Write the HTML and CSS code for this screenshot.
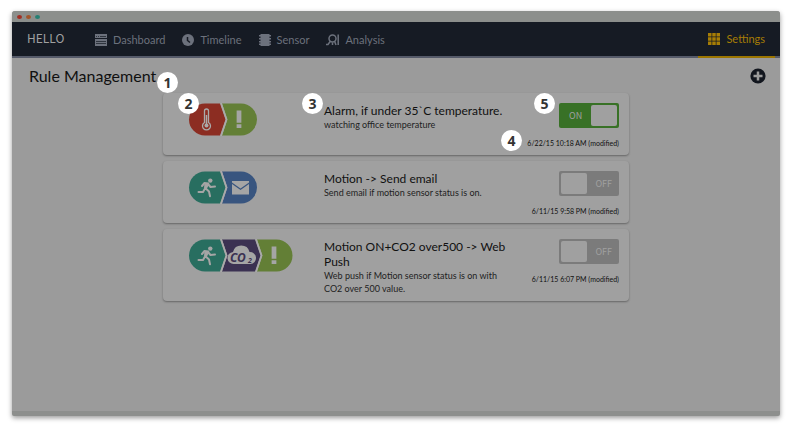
FILE: index.html
```html
<!DOCTYPE html>
<html lang="en">
<head>
<meta charset="utf-8">
<title>Rule Management</title>
<link rel="stylesheet" href="styles.css">
</head>
<body>
<svg class="defs" aria-hidden="true">
  <symbol id="run" viewBox="0 0 20 20">
    <circle cx="13.300" cy="2.600" r="2.200" fill="currentColor"/>
    <path d="M5 8 L7.500 5 L11.300 5.500 L8.800 10.500 L12 13.500 L13 18.300 M8 10.500 L6 14 L1.500 14 M11 6 L13.500 9 L18 8.500" fill="none" stroke="currentColor" stroke-width="2" stroke-linejoin="round" stroke-linecap="round"/>
    <path d="M7.500 5 L11.800 5.500 L9.500 11 L7 10z" fill="currentColor"/>
  </symbol>
  <symbol id="bang" viewBox="0 0 6 20">
    <path d="M0.500 0.500h5v13h-5z M0.500 15h5v4h-5z" fill="currentColor"/>
  </symbol>
</svg>
<div class="window">
  <div class="titlebar"><i class="dot red"></i><i class="dot orange"></i><i class="dot teal"></i></div>
  <nav class="nav">
    <a class="brand" href="#">HELLO</a>
    <a class="item" href="#">
      <svg width="12" height="12" viewBox="0 0 12 12"><path fill="currentColor" d="M0 0h12v4H0zM0 5h12v7H0z"/><path stroke="#161b24" d="M1 2.500h1M3 2.500h1M5 2.500h6M1 7.500h10M1 9.500h10" stroke-width=".7"/></svg>
      Dashboard</a>
    <a class="item" href="#">
      <svg width="12" height="12" viewBox="0 0 12 12"><circle cx="6" cy="6" r="6" fill="currentColor"/><path d="M5.500 3v3.500L8 8.500" fill="none" stroke="#161b24" stroke-width="1.500"/></svg>
      Timeline</a>
    <a class="item" href="#">
      <svg width="12" height="12" viewBox="0 0 12 12"><path fill="currentColor" d="M1.500 0h9v12h-9zM0 1h12v1.500H0zM0 4h12v1.500H0zM0 7h12v1.500H0zM0 9.500h12V11H0z"/></svg>
      Sensor</a>
    <a class="item" href="#">
      <svg width="13" height="12" viewBox="0 0 13 12"><circle cx="6.500" cy="4.500" r="3.500" fill="none" stroke="currentColor" stroke-width="1.500"/><path fill="none" stroke="currentColor" stroke-width="1.500" d="M0 10.500H2L4.500 7M12.200 0.500v10.500M6.500 11V8.500M8.500 7 10 11"/></svg>
      Analysis</a>
    <a class="item active" href="#">
      <svg width="12" height="12" viewBox="0 0 12 12"><path fill="currentColor" d="M0 0h3.500v3.500H0zM4.250 0h3.500v3.500h-3.500zM8.500 0H12v3.500H8.500zM0 4.250h3.500v3.500H0zM4.250 4.250h3.500v3.500h-3.500zM8.500 4.250H12v3.500H8.500zM0 8.500h3.500V12H0zM4.250 8.500h3.500V12h-3.500zM8.500 8.500H12V12H8.500z"/></svg>
      Settings</a>
  </nav>
  <main class="main">
    <header class="head">
      <h1>Rule Management</h1>
      <button class="add" type="button" aria-label="Add rule">
        <svg width="16" height="16" viewBox="0 0 16 16"><circle cx="8" cy="8" r="7.600" fill="#12161e"/><path d="M8 3.500v9M3.500 8h9" stroke="#9b9b9b" stroke-width="2.500"/></svg>
      </button>
    </header>
    <section class="rules">
      <article class="card">
        <svg class="flow" width="69" height="33" viewBox="0 0 69 33">
          <path fill="#8c2d22" d="M17 0.500H32L37.500 16.500 32 32.500H17A16 16 0 0 1 17 0.500z"/>
          <path fill="#637f36" d="M34 0.500H53A16 16 0 0 1 53 32.500H34L39.500 16.500z"/>
          <path d="M33 0 38.500 16.500 33 33" fill="none" stroke="#aaa" stroke-width="1.500"/>
          <path d="M16.500 19.500V8a2 2 0 0 1 4 0v11.500a4 4 0 1 1-4 0z" fill="none" stroke="#aaa" stroke-width="1.300"/>
          <circle cx="18.500" cy="22.500" r="2" fill="#aaa"/><path d="M18.500 12v10" stroke="#aaa" stroke-width="1.500"/>
          <use href="#bang" x="48" y="7" width="6" height="19" color="#a5a5a5"/>
        </svg>
        <div class="text"><h2>Alarm, if under 35`C temperature.</h2><p>watching office temperature</p></div>
        <div class="side">
          <label class="switch"><input type="checkbox" checked aria-label="Alarm rule"><span>ON</span></label>
          <time>6/22/15 10:18 AM (modified)</time>
        </div>
        <b class="badge one">1</b><b class="badge two">2</b><b class="badge three">3</b><b class="badge four">4</b><b class="badge five">5</b>
      </article>
      <article class="card">
        <svg class="flow" width="69" height="33" viewBox="0 0 69 33">
          <path fill="#286e60" d="M17 0.500H32L37.500 16.500 32 32.500H17A16 16 0 0 1 17 0.500z"/>
          <path fill="#38557f" d="M34 0.500H53A16 16 0 0 1 53 32.500H34L39.500 16.500z"/>
          <path d="M33 0 38.500 16.500 33 33" fill="none" stroke="#aaa" stroke-width="1.500"/>
          <use href="#run" x="9" y="7" width="20" height="20" color="#a5a5a5"/>
          <path d="M44 10h17v1.500l-8.500 6-8.500-6zM44 13l8.500 6 8.500-6v10.500H44z" fill="#a5a5a5"/>
        </svg>
        <div class="text"><h2>Motion -&gt; Send email</h2><p>Send email if motion sensor status is on.</p></div>
        <div class="side">
          <label class="switch"><input type="checkbox" aria-label="Send email rule"><span>OFF</span></label>
          <time>6/11/15 9:58 PM (modified)</time>
        </div>
      </article>
      <article class="card">
        <svg class="flow" width="105" height="33" viewBox="0 0 105 33">
          <path fill="#286e60" d="M17 0.500H32L37.500 16.500 32 32.500H17A16 16 0 0 1 17 0.500z"/>
          <path fill="#3b3152" d="M34 0.500H67L72.500 16.500 67 32.500H34L39.500 16.500z"/>
          <path fill="#637f36" d="M69 0.500H88.500A16 16 0 0 1 88.500 32.500H69L74.500 16.500z"/>
          <path d="M33 0 38.500 16.500 33 33M68 0 73.500 16.500 68 33" fill="none" stroke="#aaa" stroke-width="1.500"/>
          <use href="#run" x="9" y="7" width="20" height="20" color="#a5a5a5"/>
          <path d="M46 25a6 6 0 0 1-1-12 8.500 8.500 0 0 1 16.500 0 6 6 0 0 1 1 12z" fill="#a5a5a5"/>
          <text x="42" y="23" class="co">CO</text><text x="60" y="24" class="co sub">2</text>
          <use href="#bang" x="83" y="7" width="6" height="19" color="#a5a5a5"/>
        </svg>
        <div class="text"><h2>Motion ON+CO2 over500 -&gt; Web Push</h2><p>Web push if Motion sensor status is on with CO2 over 500 value.</p></div>
        <div class="side">
          <label class="switch"><input type="checkbox" aria-label="Web push rule"><span>OFF</span></label>
          <time>6/11/15 6:07 PM (modified)</time>
        </div>
      </article>
    </section>
  </main>
</div>
</body>
</html>
```
FILE: styles.css
```css
* { box-sizing: border-box; }
body {
  margin: 0;
  padding: 11px 12px 12px;
  min-height: 100vh;
  display: flex;
  background: #fff;
  color: #101010;
  font-family: Lato, "Noto Sans", sans-serif;
}
.defs { position: absolute; width: 0; height: 0; }
h1, h2, p { margin: 0; font-weight: 400; }
.window {
  flex: 1;
  display: flex;
  flex-direction: column;
  background: #9b9b9b;
  border-bottom: 5px solid #8d8f8d;
  border-radius: 3px 3px 2px 2px;
  box-shadow: 0 2px 5px rgba(0, 0, 0, .4);
}
.titlebar {
  height: 11px;
  padding-left: 5px;
  display: flex;
  align-items: center;
  gap: 4px;
  background: #8c8f8c;
  border-radius: 3px 3px 0 0;
}
.dot { width: 5px; height: 4px; border-radius: 50%; }
.red { background: #a32d22; }
.orange { background: #a3552a; }
.teal { background: #268073; }
.nav {
  height: 36px;
  display: flex;
  padding: 0 5px 0 15px;
  background: #161b24;
  border-bottom: 2px solid #555a69;
  font-size: 11px;
  line-height: 36px;
}
.nav a { text-decoration: none; color: #6c717c; }
.nav .brand {
  width: 68px;
  color: #a0a0a0;
  font-family: "Noto Sans CJK KR", sans-serif;
  font-size: 12px;
  line-height: 32px;
}
.item { display: flex; align-items: center; gap: 6px; margin-right: 17px; height: 36px; }
.nav .active {
  margin: 0 0 0 auto;
  padding: 0 10px;
  border-bottom: 2px solid #9b7500;
  color: #a67d05;
}
.main { flex: 1; }
.head {
  display: flex;
  justify-content: space-between;
  align-items: center;
  height: 35px;
  padding: 0 14px 0 17px;
}
h1 { font-size: 16px; line-height: 24px; }
.add { padding: 0; border: 0; background: none; display: flex; }
.rules { max-width: 466px; margin: 0 auto; display: grid; gap: 6px; }
.card {
  position: relative;
  display: flex;
  align-items: flex-start;
  min-height: 62px;
  padding: 10px 10px 6px 25px;
  background: #a0a0a0;
  border-radius: 4px;
  box-shadow: 0 1px 2px rgba(0, 0, 0, .35);
}
.flow { flex: none; }
.text { width: 188px; margin-left: auto; }
h2 { font-size: 12px; line-height: 15px; }
p { font-size: 9px; line-height: 13px; color: #222; }
.side {
  width: 107px;
  display: flex;
  flex-direction: column;
  align-items: flex-end;
  gap: 9px;
}
time { font-size: 7px; line-height: 12px; white-space: nowrap; }
.switch {
  position: relative;
  display: block;
  width: 60px;
  height: 25px;
  font-family: "Noto Sans CJK KR", sans-serif;
  font-size: 9px;
}
.switch input {
  appearance: none;
  width: 60px;
  height: 25px;
  margin: 0;
  display: flex;
  padding: 2px;
  border-radius: 2px;
  background: #7b7b7b;
}
.switch input::before {
  content: "";
  width: 26px;
  height: 21px;
  border-radius: 2px;
  background: #a0a0a0;
}
.switch input:checked { background: #387126; justify-content: flex-end; }
.switch span { position: absolute; top: 0; right: 7px; line-height: 25px; color: #a0a0a0; }
.switch input:checked + span { right: auto; left: 10px; }
.co { font: italic 700 12px "Noto Sans", sans-serif; fill: #3b3152; }
.co.sub { font-size: 7px; }
.badge {
  position: absolute;
  width: 21px;
  height: 21px;
  border-radius: 50%;
  background: #fff;
  color: #333;
  font-family: "Noto Sans", sans-serif;
  font-size: 14px;
  line-height: 21px;
  text-align: center;
}
.one { left: -6px; top: -21px; }
.two { left: 15px; top: 0; }
.three { left: 139px; top: 0; }
.four { left: 338px; top: 37px; }
.five { left: 371px; top: 0; }
```
